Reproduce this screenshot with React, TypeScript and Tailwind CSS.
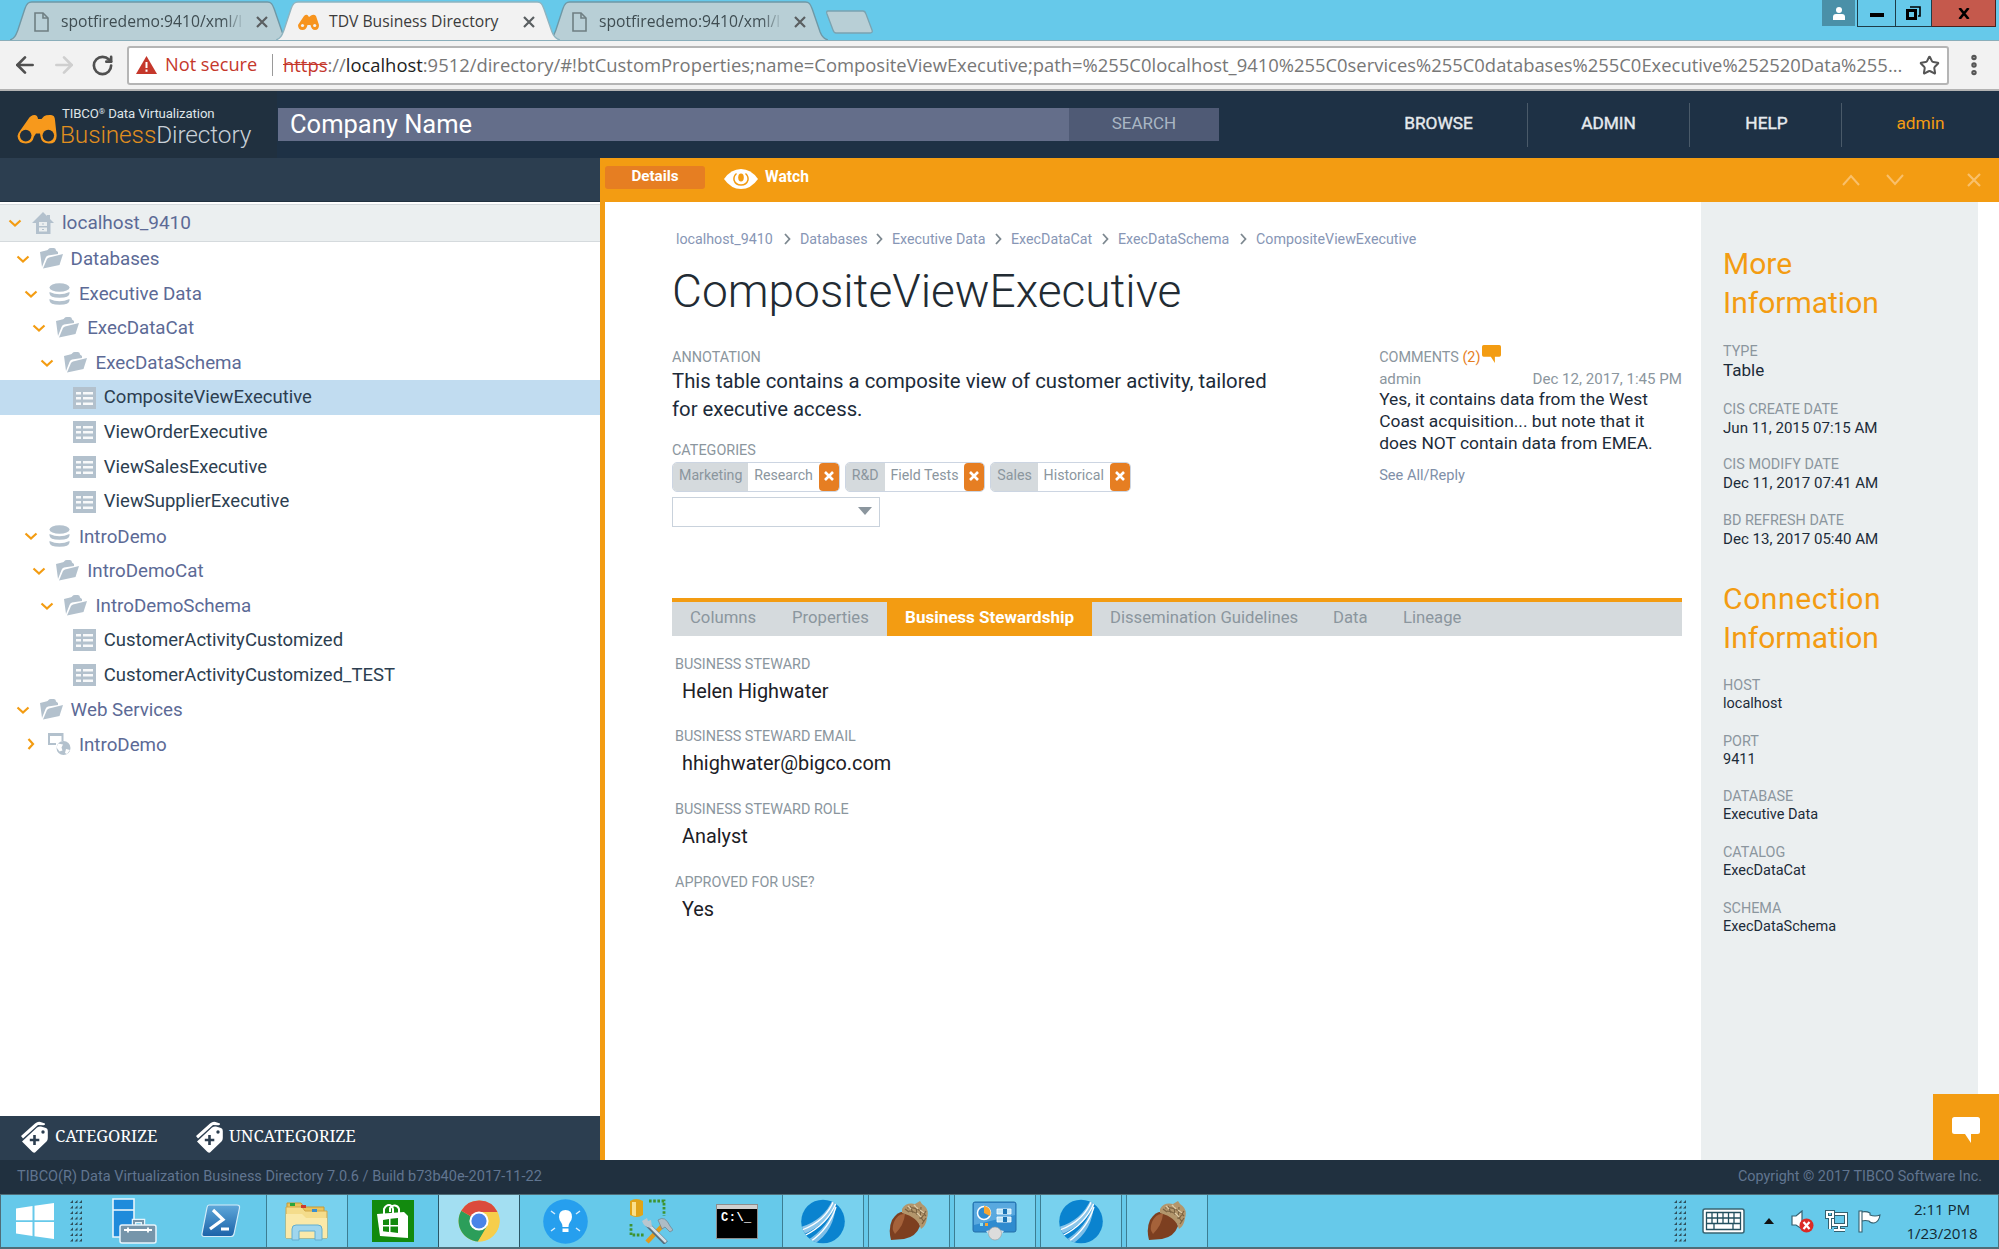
import React from 'react';
import { Star, ArrowLeft, ArrowRight, RotateCw, MoreVertical } from 'lucide-react';

const UI = "font-['Open_Sans',sans-serif]";

/* ---------- browser chrome ---------- */

function PageIcon() {
  return (
    <svg width="15" height="20" viewBox="0 0 15 20" fill="none" stroke="#6f7f83" strokeWidth="1.6" className="shrink-0">
      <path d="M1 1h8l5 5v13H1z" />
      <path d="M9 1v5h5" />
    </svg>
  );
}

function Binoculars({ w, h }: { w: number; h: number }) {
  return (
    <svg width={w} height={h} viewBox="0 0 40 30" className="shrink-0">
      <path
        fill="#f7991c"
        d="M1.500 19L11 5.500Q13.500 1 17.500 1Q20.500 1 21 5h3.500L27 2.200Q29 .8 34 1Q37.800 1.200 38 6L39.500 20Q40.500 29.500 32 29.500Q24.500 29.500 23.500 22.500L23 19.500h-4L17 22.500Q15.500 29.500 9 29.500Q1 29.500 .5 22z"
      />
      <circle cx="8.700" cy="21.600" r="5.800" fill="#20303f" />
      <circle cx="31.300" cy="21.600" r="5.800" fill="#20303f" />
    </svg>
  );
}

function BrowserTab({ title, active, fav, cut }: { title: string; active?: boolean; fav: React.ReactNode; cut?: boolean }) {
  return (
    <div className={active ? 'relative z-10 -mr-[12px] h-[39px] w-[284px]' : 'relative -mr-[14px] h-[39px] w-[280px]'}>
      <svg className="absolute inset-0 h-full w-full" viewBox="0 0 284 39" preserveAspectRatio="none">
        <path
          d="M0 39C5 37 6 34 8 29L15 8C17 2 19 1 22 1H261C265 1 266 3 268 8L276 31C278 36 280 38 284 39"
          fill={active ? '#f2f2f2' : '#b8cfd6'}
          stroke={active ? '#8fb4c0' : '#6e98a6'}
          strokeWidth="1.400"
        />
      </svg>
      <div className={active ? 'relative flex h-full items-center pl-[22px] pt-[3px]' : 'relative flex h-full items-center pl-[24px] pt-[3px]'}>
        {fav}
        <span
          className={
            active
              ? 'ml-[10px] w-[183px] whitespace-nowrap text-[15.700px] text-[#3b3b3b]'
              : 'ml-[12px] w-[184px] whitespace-nowrap text-[15.700px] text-[#3f4d52] [mask-image:linear-gradient(90deg,#000_88%,transparent)]'
          }
        >
          {title}
          {cut && 'l'}
        </span>
        <svg width="12" height="12" viewBox="0 0 12 12" className="ml-[11px]" stroke="#5a5f61" strokeWidth="2.200">
          <path d="M1 1l10 10M11 1L1 11" />
        </svg>
      </div>
    </div>
  );
}

function TabStrip() {
  return (
    <div className="relative flex h-[40px] items-end bg-[#66c9ea] pl-[10px]">
      <BrowserTab title="spotfiredemo:9410/xml/" cut fav={<PageIcon />} />
      <BrowserTab
        title="TDV Business Directory"
        active
        fav={
          <svg width="21" height="16" viewBox="0 0 21 16">
            <path fill="#f7941e" d="M0 11L6 2Q8 0 9.500 1l1.500 2L13 1.500Q16 0 18 2l3 9Q21 16 17 16Q13.500 16 12.500 11h-3Q8.500 16 4.500 16Q0 16 0 11z" />
            <circle cx="4.500" cy="11.500" r="1.600" fill="#f2f2f2" />
            <circle cx="16.700" cy="11.500" r="1.600" fill="#f2f2f2" />
          </svg>
        }
      />
      <BrowserTab title="spotfiredemo:9410/xml/" cut fav={<PageIcon />} />
      <svg width="48" height="24" viewBox="0 0 48 24" className="mb-[6px] ml-[12px]">
        <path d="M2 1H37Q39 1 40 4L46 20Q47 23 44 23H10Q8 23 7 20L1 4Q0 1 2 1z" fill="#b8cfd6" stroke="#7aa3b1" strokeWidth="1.300" />
      </svg>
      <div className="ml-auto flex h-[27px] self-start">
        <div className="mr-[2px] flex h-[26px] w-[33px] items-center justify-center bg-[#4a90a8]">
          <svg width="12" height="13" viewBox="0 0 12 13" fill="#fff">
            <circle cx="6" cy="3" r="3" />
            <path d="M0 13V10Q0 7 3 7h6q3 0 3 3v3z" />
          </svg>
        </div>
        <div className="flex w-[39px] items-center justify-center border border-t-0 border-[#1e3c48]">
          <div className="mt-[4px] h-[4px] w-[14px] bg-black" />
        </div>
        <div className="flex w-[36px] items-center justify-center border-b border-r border-[#1e3c48]">
          <svg width="15" height="14" viewBox="0 0 15 14" fill="none" stroke="#000">
            <path d="M1.500 4.500h8v8h-8z" strokeWidth="3" />
            <path d="M4 1h10v9h-2" strokeWidth="1.600" />
          </svg>
        </div>
        <div className="mr-[3px] flex w-[64px] items-center justify-center border-b border-r border-[#4d1f1b] bg-[#c5594c]">
          <svg width="12" height="11" viewBox="0 0 12 11" stroke="#000" strokeWidth="2.600">
            <path d="M1.500 0l9 11M10.500 0l-9 11" />
          </svg>
        </div>
      </div>
    </div>
  );
}

function AddressBar() {
  return (
    <div className="flex h-[51px] items-center border-b-[2px] border-t border-b-[#b3b3b3] border-t-[#8aaeba] bg-[#f2f2f2]">
      <ArrowLeft className="ml-[12px] h-[26px] w-[26px] text-[#505050]" strokeWidth={2.500} />
      <ArrowRight className="ml-[13px] h-[26px] w-[26px] text-[#cfcfcf]" strokeWidth={2.500} />
      <RotateCw className="ml-[14px] h-[23px] w-[23px] text-[#505050]" strokeWidth={2.800} />
      <div className="ml-[13px] flex h-[39px] w-[1822px] items-center whitespace-nowrap rounded-[3px] border-2 border-[#b5b5b5] bg-white text-[18.400px]">
        <svg width="21" height="18" viewBox="0 0 21 18" className="ml-[7px]">
          <path d="M10.500 0L21 18H0z" fill="#c5372b" />
          <path d="M10.500 6v6M10.500 13.500v2.200" stroke="#fff" strokeWidth="2" />
        </svg>
        <span className="ml-[8px] w-[96px] text-[18.200px] text-[#c5372b]">Not secure</span>
        <span className="ml-[11px] h-[22px] w-px bg-[#9a9a9a]" />
        <span className="ml-[10px] text-[#c5372b] line-through">https</span>
        <span className="text-[#777]">://</span>
        <span className="text-[#222]">localhost</span>
        <span className="tracking-[0.006px] text-[#777]">
          :9512/directory/#!btCustomProperties;name=CompositeViewExecutive;path=%255C0localhost_9410%255C0services%255C0databases%255C0Executive%252520Data%255...
        </span>
        <Star className="ml-auto mr-[7px] h-[21px] w-[21px] text-[#555]" strokeWidth={2.300} />
      </div>
      <MoreVertical className="ml-[12px] h-[26px] w-[26px] text-[#555]" strokeWidth={3} />
    </div>
  );
}

/* ---------- application header ---------- */

function Header() {
  return (
    <div className="flex h-[67px] bg-[#1e3145]">
      <div className="flex w-[277px] bg-[#20303f] pl-[17px] pt-[22px]">
        <div className="pt-[1px]"><Binoculars w={40} h={30} /></div>
        <div className="ml-[3px] flex flex-col whitespace-nowrap">
          <span className="-mt-[7px] ml-[2px] text-[13.200px] leading-[16px] tracking-[-0.100px] text-[#dfe4e8]">
            TIBCO<sup className="relative -top-[4px] text-[8px] leading-none">®</sup> Data Virtualization
          </span>
          <span className="-mt-[1px] text-[24.400px] font-light leading-[28px] tracking-[-0.100px] text-[#c8d0d8]">
            <span className="text-[#e08f1e]">Business</span>Directory
          </span>
        </div>
      </div>
      <div className="ml-[1px] mt-[17px] flex h-[33px]">
        <div className="flex w-[791px] items-center bg-[#646e8a] pb-[1px] pl-[12px] text-[25.500px] text-white">Company Name</div>
        <div className="flex w-[150px] items-center justify-center bg-[#4f5a75] pb-[2px] text-[17px] text-[#a9b6c4]">SEARCH</div>
      </div>
      <div className="ml-[131px] mt-[12px] flex h-[44px] text-[17.300px] text-[#e6eaee] [&>div]:flex [&>div]:items-center [&>div]:justify-center [&>div]:pb-[2px]">
        <div className="w-[178px] border-r border-[#4a5a69] pr-0 [-webkit-text-stroke:0.400px]">BROWSE</div>
        <div className="w-[162px] border-r border-[#4a5a69] [-webkit-text-stroke:0.400px]">ADMIN</div>
        <div className="w-[152px] border-r border-[#4a5a69] pl-[2px] [-webkit-text-stroke:0.400px]">HELP</div>
        <div className="w-[157px] text-[#f39c12]">admin</div>
      </div>
    </div>
  );
}

/* ---------- tree ---------- */

type Kind = 'home' | 'folder' | 'db' | 'table' | 'web';
const TREE: [number, Kind, string, boolean?][] = [
  [1, 'folder', 'Databases'],
  [2, 'db', 'Executive Data'],
  [3, 'folder', 'ExecDataCat'],
  [4, 'folder', 'ExecDataSchema'],
  [5, 'table', 'CompositeViewExecutive', true],
  [5, 'table', 'ViewOrderExecutive'],
  [5, 'table', 'ViewSalesExecutive'],
  [5, 'table', 'ViewSupplierExecutive'],
  [2, 'db', 'IntroDemo'],
  [3, 'folder', 'IntroDemoCat'],
  [4, 'folder', 'IntroDemoSchema'],
  [5, 'table', 'CustomerActivityCustomized'],
  [5, 'table', 'CustomerActivityCustomized_TEST'],
  [1, 'folder', 'Web Services'],
  [2, 'web', 'IntroDemo'],
];

function TreeIcon({ kind }: { kind: Kind }) {
  return (
    <svg width="23" height="22" viewBox="0 0 23 22" className="shrink-0" fill="#b3c1cd">
      {kind === 'home' && (
        <>
          <path d="M11 0l4 4V3h3v4l4 4h-3.500v11H4V11H0z" />
          <path d="M7 10h8v4H7zM7 15.500h8v4H7z" fill="#ebeff0" />
          <path d="M10 11.500h2v1h-2zM10 17h2v1h-2z" />
        </>
      )}
      {kind === 'folder' && (
        <>
          <path d="M0 4l6-1.500Q8 2 8.500 1Q9 0 11 0h3q2 0 2 2.500L18 4v2L8 7.500Q6 8 5.500 10L2 19z" />
          <path d="M9 9.500L23 6l-3.500 11L3 20.500L7 11Q7.500 10 9 9.500z" />
        </>
      )}
      {kind === 'db' && (
        <>
          <ellipse cx="11.500" cy="4.500" rx="10" ry="4.300" />
          <path d="M1.500 9q10 4.600 20 0v1.500q0 4.200-10 4.200t-10-4.200z" />
          <path d="M1.500 16q10 4.600 20 0v1.500q0 4.200-10 4.200t-10-4.200z" />
        </>
      )}
      {kind === 'table' && (
        <>
          <path d="M0 0h23v22H0z" />
          <path d="M3 5h5v2.500H3zM10 5h10v2.500H10zM3 10h5v2.500H3zM10 10h10v2.500H10zM3 15.500h5V18H3zM10 15.500h10V18H10z" fill="#fff" fillOpacity=".9" />
        </>
      )}
      {kind === 'web' && (
        <>
          <path d="M0 0h15.500v8h-2V3H2v7h6v2H0z" />
          <circle cx="15.500" cy="15" r="7" />
          <path d="M10 10.500l5 1-1.500 3 1 3-3 1-3-4zM18 16l4 1-3 4-2-1z" fill="#fff" />
        </>
      )}
    </svg>
  );
}

function Chevron({ open = true }: { open?: boolean }) {
  return (
    <svg width="14" height="14" viewBox="0 0 14 14" fill="none" stroke="#f39c12" strokeWidth="2.200" className="shrink-0">
      <path d={open ? 'M1.500 4.500l5.500 5 5.500-5' : 'M4.500 2l4.500 5-4.500 5'} />
    </svg>
  );
}

function Tree() {
  return (
    <div className="flex w-[600px] flex-col">
      <div className="h-[44px] border-b border-[#20303f] bg-[#2c3e50]" />
      <div className="mt-[2px] flex h-[37.500px] items-center border-y border-[#d5dadd] bg-[#ebeff0] pl-[8px]">
        <Chevron />
        <div className="ml-[10px]"><TreeIcon kind="home" /></div>
        <span className="ml-[7px] text-[19px] text-[#5c6a96]">localhost_9410</span>
      </div>
      {TREE.map(([lvl, kind, label, sel], i) => (
        <div
          key={i}
          className={sel ? 'flex h-[34.700px] items-center bg-[#c1dcf0] pl-[7.300px]' : 'flex h-[34.700px] items-center pl-[7.300px]'}
        >
          <div style={{ width: lvl * 8.3 }} className="shrink-0" />
          {kind === 'table' ? <div className="w-[14px] shrink-0" /> : <Chevron open={kind !== 'web'} />}
          <div className="ml-[10px]"><TreeIcon kind={kind} /></div>
          <span
            className={
              kind === 'table'
                ? 'ml-[8px] whitespace-nowrap pt-[1px] text-[18.500px] text-[#2c3e50]'
                : 'ml-[8px] whitespace-nowrap pt-[0.500px] text-[18.750px] text-[#5c6a96]'
            }
          >
            {label}
          </span>
        </div>
      ))}
      <div className="mt-auto flex h-[44.500px] items-center bg-[#2c3e50] font-['Noto_Serif',serif] text-[16.600px] tracking-[-0.050px] text-white">
        <TagIcon className="ml-[20px]" />
        <span className="ml-[7px] w-[140px] pb-[3px]">CATEGORIZE</span>
        <TagIcon className="" />
        <span className="ml-[6px] pb-[3px]">UNCATEGORIZE</span>
      </div>
    </div>
  );
}

function TagIcon({ className }: { className: string }) {
  return (
    <svg width="28" height="32" viewBox="0 0 28 32" className={`${className} mb-[2px] shrink-0`} fill="#fff">
      <path d="M1 15L15 2.500Q18 0 20.500 1L25 2.500Q25.500 4.500 23 4.200L18 4L3 17.500z" />
      <path d="M2 20.500L17 6.500Q19 5 21 5.500L26 7q1.800.5 1.800 3V17Q27.800 19 26.500 20.500L15 31.500Q13 32 12 30.500z" />
      <circle cx="23" cy="11" r="1.700" fill="#2c3e50" />
      <path d="M14.500 14v10M9.800 19h9.500" stroke="#2c3e50" strokeWidth="2.600" />
    </svg>
  );
}

/* ---------- details ---------- */

const LABEL = 'text-[14.400px] leading-[20px] text-[#8b969e] whitespace-nowrap';

function Tag({ group, name }: { group: string; name: string }) {
  return (
    <div className="flex h-[30px] overflow-hidden rounded-[5px] border border-[#ccd5e2] text-[14.200px] text-[#8b969e]">
      <span className="flex items-center whitespace-nowrap bg-[#d5dadd] px-[6px] pb-[2px]">{group}</span>
      <span className="flex items-center whitespace-nowrap bg-white px-[5.800px] pb-[2px]">{name}</span>
      <span className="flex w-[20px] items-center justify-center rounded-[4px] bg-[#e67e22] pb-[3px]">
        <svg width="10" height="10" viewBox="0 0 10 10" stroke="#fff" strokeWidth="2.600">
          <path d="M1 1l8 8M9 1L1 9" />
        </svg>
      </span>
    </div>
  );
}

function Bubble({ w, h, fill }: { w: number; h: number; fill: string }) {
  return (
    <svg width={w} height={h} viewBox="0 0 28 26" preserveAspectRatio="none" fill={fill}>
      <path d="M2.500 0h23Q28 0 28 2.500v12Q28 17 25.500 17H19v9L13 17H2.500Q0 17 0 14.500v-12Q0 0 2.500 0z" />
    </svg>
  );
}

const CRUMBS: [string, string][] = [
  ['localhost_9410', 'w-[124px]'],
  ['Databases', 'w-[92px]'],
  ['Executive Data', 'w-[119px]'],
  ['ExecDataCat', 'w-[107px]'],
  ['ExecDataSchema', 'w-[138px]'],
  ['CompositeViewExecutive', ''],
];

const FIELDS: [string, string][] = [
  ['BUSINESS STEWARD', 'Helen Highwater'],
  ['BUSINESS STEWARD EMAIL', 'hhighwater@bigco.com'],
  ['BUSINESS STEWARD ROLE', 'Analyst'],
  ['APPROVED FOR USE?', 'Yes'],
];

function Info({ label, value, big, date }: { label: string; value: string; big?: boolean; date?: boolean }) {
  return (
    <div className={big ? 'h-[58px]' : 'h-[55.600px]'}>
      <div className={LABEL}>{label}</div>
      <div
        className={
          big
            ? '-mt-[2px] text-[17px] leading-[20px] text-[#1c2b39]'
            : date
              ? '-mt-[1px] whitespace-nowrap text-[15.100px] leading-[18px] text-[#1c2b39]'
              : '-mt-[1px] whitespace-nowrap text-[14.500px] leading-[18px] text-[#1c2b39]'
        }
      >
        {value}
      </div>
    </div>
  );
}

function Details() {
  return (
    <div className="flex flex-1 flex-col border-l-[5px] border-[#f39c12]">
      <div className="flex h-[44px] items-start bg-[#f39c12] pt-[8px] text-[15.600px] font-bold text-white">
        <div className="flex h-[23px] w-[100px] items-center justify-center rounded-[3px] bg-[#e67e22] pb-[2px] text-[15.200px]">Details</div>
        <svg width="34" height="20" viewBox="0 0 34 20" className="ml-[19px] mt-[3px]">
          <path d="M0 10Q7 0 17 0T34 10Q27 20 17 20T0 10z" fill="#fff" />
          <path d="M12.500 4.500Q9.500 7 10 11Q11.500 16 17 16T24 11Q24.500 7 21.500 4.500" fill="none" stroke="#f39c12" strokeWidth="1.500" />
          <ellipse cx="17" cy="8.500" rx="2.800" ry="4" fill="#f39c12" />
        </svg>
        <span className="ml-[7px]">Watch</span>
        <div className="ml-auto mr-[18px] mt-[7px] flex items-center">
          <svg width="18" height="14" viewBox="0 0 18 14" fill="none" stroke="#f9c06b" strokeWidth="2"><path d="M1 12l8-9 8 9" /></svg>
          <svg width="18" height="14" viewBox="0 0 18 14" fill="none" stroke="#f9c06b" strokeWidth="2" className="ml-[26px]"><path d="M1 2l8 9 8-9" /></svg>
          <svg width="14" height="14" viewBox="0 0 14 14" fill="none" stroke="#f9c06b" strokeWidth="2.200" className="ml-[63px]"><path d="M1 1l12 12M13 1L1 13" /></svg>
        </div>
      </div>

      <div className="flex flex-1 bg-white">
        <div className="flex w-[1077px] flex-col pl-[67px]">
          <div className="mt-[27px] flex h-[20px] pl-[4px] text-[14.250px] leading-[20px] text-[#8796b5]">
            {CRUMBS.map(([t, w], i) => (
              <span key={t} className={`${w} flex whitespace-nowrap`}>
                {t}
                {i < 5 && (
                  <svg width="7" height="12" viewBox="0 0 7 12" fill="none" stroke="#7d8890" strokeWidth="1.800" className="ml-auto mr-[9px] mt-[4px]">
                    <path d="M1 1l4.500 5L1 11" />
                  </svg>
                )}
              </span>
            ))}
          </div>
          <h1 className="mt-[14px] text-[46.050px] font-light leading-[56px] text-[#222b33]">CompositeViewExecutive</h1>

          <div className="mt-[29px] flex h-[250px]">
            <div className="w-[707.500px]">
              <div className={LABEL}>ANNOTATION</div>
              <p className="w-[620px] text-[20.330px] leading-[27.800px] text-[#1c2b39]">
                This table contains a composite view of customer activity, tailored
                <br />
                for executive access.
              </p>
              <div className={`${LABEL} mt-[17.500px]`}>CATEGORIES</div>
              <div className="mt-[1px] flex gap-[5px]">
                <Tag group="Marketing" name="Research" />
                <Tag group="R&D" name="Field Tests" />
                <Tag group="Sales" name="Historical" />
              </div>
              <div className="mt-[5px] flex h-[30px] w-[208px] items-center justify-end border border-[#c9d2dc] pb-[2px] pr-[7px]">
                <svg width="14" height="8" viewBox="0 0 14 8"><path d="M0 0h14L7 8z" fill="#8b969e" /></svg>
              </div>
            </div>
            <div className="w-[303px]">
              <div className={`${LABEL} flex`}>
                COMMENTS&nbsp;<span className="text-[#e67e22]">(2)</span>
                <div className="-mt-[3px] ml-[2px]"><Bubble w={19} h={18} fill="#f39c12" /></div>
              </div>
              <div className="flex justify-between pt-[1px] text-[15.100px] leading-[20px] text-[#8b969e]">
                <span>admin</span>
                <span>Dec 12, 2017, 1:45 PM</span>
              </div>
              <p className="-mt-[1px] whitespace-nowrap text-[17.400px] leading-[22px] text-[#1c2b39]">
                Yes, it contains data from the West
                <br />
                Coast acquisition... but note that it
                <br />
                does NOT contain data from EMEA.
              </p>
              <div className="mt-[11px] text-[14.600px] leading-[20px] text-[#7f8fa8]">See All/Reply</div>
            </div>
          </div>

          <div className="flex h-[37.500px] w-[1010px] border-t-[4px] border-[#f39c12] bg-[#d5dadd] text-[16.700px] text-[#8b969e] [&>span]:flex [&>span]:items-center [&>span]:whitespace-nowrap [&>span]:pb-[3px]">
            <span className="w-[102px] pl-[18px]">Columns</span>
            <span className="w-[113px] pl-[18px]">Properties</span>
            <span className="w-[205px] justify-center bg-[#f39c12] text-[17px] font-bold text-white">Business Stewardship</span>
            <span className="w-[223px] pl-[18px]">Dissemination Guidelines</span>
            <span className="w-[70px] pl-[18px]">Data</span>
            <span className="pl-[18px]">Lineage</span>
          </div>

          <div className="mt-[19px] pl-[3px]">
            {FIELDS.map(([l, v]) => (
              <div key={l} className="h-[72.800px]">
                <div className={LABEL}>{l}</div>
                <div className="ml-[7px] mt-[4px] text-[19.850px] leading-[26px] text-[#1c2026]">{v}</div>
              </div>
            ))}
          </div>
        </div>

        <div className="ml-[19px] w-[277px] bg-[#ebeff0] pl-[22px]">
          <h2 className="mt-[41.500px] w-[160px] text-[30px] leading-[39px] text-[#f39c12]">More Information</h2>
          <div className="mt-[20px]">
            <Info label="TYPE" value="Table" big />
            <Info label="CIS CREATE DATE" value="Jun 11, 2015 07:15 AM" date />
            <Info label="CIS MODIFY DATE" value="Dec 11, 2017 07:41 AM" date />
            <Info label="BD REFRESH DATE" value="Dec 13, 2017 05:40 AM" date />
          </div>
          <h2 className="mt-[13px] w-[160px] text-[30px] leading-[39px] text-[#f39c12]"><span className="tracking-[0.600px]">Connection</span> Information</h2>
          <div className="mt-[19px]">
            <Info label="HOST" value="localhost" />
            <Info label="PORT" value="9411" />
            <Info label="DATABASE" value="Executive Data" />
            <Info label="CATALOG" value="ExecDataCat" />
            <Info label="SCHEMA" value="ExecDataSchema" />
          </div>
        </div>
      </div>
    </div>
  );
}

/* ---------- taskbar ---------- */

function Grip() {
  return (
    <svg width="12" height="42" viewBox="0 0 12 42" fill="#2f4e5a">
      {[0, 1, 2, 3, 4, 5, 6, 7].map((r) => (
        <path key={r} d={`M0 ${r * 5.5 + 3}l3-3v3zM4.500 ${r * 5.5 + 3}l3-3v3zM9 ${r * 5.5 + 3}l3-3v3z`} />
      ))}
    </svg>
  );
}

function Tibco() {
  return (
    <svg width="44" height="45" viewBox="0 0 44 45">
      <defs>
        <clipPath id="disc"><circle cx="22" cy="22.500" r="21.800" /></clipPath>
      </defs>
      <g clipPath="url(#disc)">
        <path d="M0 0h44v45H0z" fill="#0a83cf" />
        <path d="M0 28Q23 21 32 0h4Q30 24 1 36z" fill="#8cc6ea" />
        <path d="M5 42Q28 29 35 3Q34 32 13 45z" fill="#7dbfe8" />
        <path d="M1 31Q25 22 33 1M3 37Q27 25 35 4M9 43Q28 30 35 8" stroke="#fff" strokeWidth="1.300" fill="none" />
      </g>
    </svg>
  );
}

function Acorn() {
  return (
    <svg width="40" height="40" viewBox="0 0 40 40">
      <path d="M3 19Q9 9 17 11Q29 15 31 25Q27 36 15 38L2 39Q-1 28 3 19z" fill="#7d3f20" />
      <path d="M5 21Q9 12 16 13Q15 24 6 33Q2 28 5 21z" fill="#a5623a" />
      <path d="M13 8Q17 1 26 3L31 0l2 3Q41 8 38 17Q37 25 32 28Q29 16 13 12z" fill="#b3966c" />
      <path d="M16 8l4 3M21 5l3 7M27 5l1 9M32 6l-1 12M37 10l-5 8M37 17l-4 6M18 7q10-2 19 8M20 10q9 0 15 11" stroke="#7c6342" strokeWidth="1.200" fill="none" />
      <path d="M19 5l3 3M25 4l4 4M31 9l4 3M28 12l4 4" stroke="#decba6" strokeWidth="1.400" />
    </svg>
  );
}

const ICONS: Record<string, React.ReactNode> = {
  server: (
    <svg width="46" height="46" viewBox="0 0 46 46">
      <path d="M1 1h21v38H1z" fill="#1f8bdb" stroke="#e8f4fb" strokeWidth="1.600" />
      <path d="M1 12h21" stroke="#e8f4fb" strokeWidth="1.600" />
      <path d="M22 27v-4h9v4" fill="none" stroke="#e8f4fb" strokeWidth="4.500" />
      <path d="M22 27v-4h9v4" fill="none" stroke="#7695aa" strokeWidth="2" />
      <rect x="8" y="27" width="36" height="18" rx="2" fill="#7695aa" stroke="#e8f4fb" strokeWidth="1.500" />
      <path d="M12 32h28M16 29.500v5M36 29.500v5" stroke="#fff" strokeWidth="1.800" />
    </svg>
  ),
  ps: (
    <svg width="40" height="34" viewBox="0 0 40 34">
      <defs>
        <linearGradient id="psg" x1="0" y1="0" x2="0" y2="1"><stop offset="0" stopColor="#5fa8da" /><stop offset="1" stopColor="#1b62a8" /></linearGradient>
      </defs>
      <path d="M8 1h28q3 0 2.500 3L33 30q-.6 2.500-3 2.500H3Q.5 32.500 1 29.500L6 3.500Q6.500 1 8 1z" fill="url(#psg)" stroke="#d3ecf8" strokeWidth="1.200" />
      <path d="M12 6l10 9.500-13 9.500M20 25h8" stroke="#fff" strokeWidth="3.200" fill="none" />
    </svg>
  ),
  files: (
    <svg width="44" height="42" viewBox="0 0 44 42">
      <path d="M2 3h14l3 4h20v8H2z" fill="#e9c35c" stroke="#c79a35" />
      <path d="M1 7h16l3 4h22v27H1z" fill="#f4dc8b" stroke="#cfa648" />
      <path d="M5 3h5v3H5z" fill="#27a53a" />
      <path d="M16 5h5v3h-5z" fill="#cf3a2c" />
      <path d="M27 9h5v3h-5z" fill="#3a8fd0" />
      <path d="M1 14h16l4 4h21v20H1z" fill="#fae9a9" />
      <path d="M7 40V29q0-4 4-4h22q4 0 4 4v11h-7v-9H14v9z" fill="#9fd6ee" stroke="#62aed0" />
    </svg>
  ),
  store: (
    <svg width="42" height="42" viewBox="0 0 42 42">
      <path d="M0 0h42v42H0z" fill="#128a0e" />
      <path d="M5 14l27-2 4 4v22l-28-2z" fill="#fff" />
      <path d="M12 14V9q2-4 5-4t4 4v4M18 12V8q2-3 5-2.500T27 9v4" stroke="#fff" strokeWidth="2" fill="none" />
      <path d="M11 20l6-1v6h-6zM18.500 18.800L26 18v7h-7.500zM11 26.500h6V32l-6-.8zM18.500 26.500H26V33l-7.500-1z" fill="#128a0e" />
    </svg>
  ),
  chrome: (
    <svg width="42" height="42" viewBox="0 0 42 42">
      <circle cx="21" cy="21" r="20.500" fill="#f6ce4b" />
      <path d="M21 21L3.300 10.800A20.500 20.500 0 0 0 20 41.500L30 26z" fill="#2c9e5a" />
      <path d="M21 21L3.300 10.800A20.500 20.500 0 0 1 39.500 12H21z" fill="#db4b3c" />
      <path d="M21 12h18.500A20.500 20.500 0 0 1 20 41.500L29 26z" fill="#f6ce4b" />
      <circle cx="21" cy="21" r="9.600" fill="#fff" />
      <circle cx="21" cy="21" r="7.600" fill="#4a84e8" />
    </svg>
  ),
  bulb: (
    <svg width="45" height="45" viewBox="0 0 45 45">
      <circle cx="22.500" cy="22.500" r="22.300" fill="#269fee" />
      <path d="M22.500 11q6.500 0 6.500 7 0 3-2.500 6-1 1.500-1 4h-6q0-2.500-1-4-2.500-3-2.500-6 0-7 6.500-7zM19.500 29.500h6V33h-6z" fill="#fff" />
      <path d="M8 12l4 3M37 12l-4 3M8 32l4-3M37 32l-4-3" stroke="#d6edfc" strokeWidth="1.500" />
    </svg>
  ),
  tools: (
    <svg width="44" height="46" viewBox="0 0 44 46">
      <path d="M1 3q6-4 13 0v14q-6 4-13 0z" fill="#e0a419" />
      <path d="M3 4h4v14q-3 0-4-1z" fill="#fbe08a" />
      <path d="M20 3h15v15M2 26v11h14" stroke="#3e9330" strokeWidth="2.800" strokeDasharray="2.600 1.600" fill="none" />
      <path d="M18 44L37 24" stroke="#e19a1d" strokeWidth="4.500" />
      <path d="M18 26L37 45" stroke="#59707e" strokeWidth="5" />
      <path d="M17 24l20 20" stroke="#d5dfe5" strokeWidth="2.600" />
      <path d="M13 23q3 8 10 6l-1-7-3 1-1-3z" fill="#b9c6ce" />
      <path d="M29 22q7-5 12 6l3 4-3 2-5-5-3 2z" fill="#aebcc5" stroke="#6e7f89" strokeWidth=".7" />
    </svg>
  ),
  cmd: (
    <div className="h-[35px] w-[42px] border border-[#8d8d8d] bg-black">
      <div className="h-[4px] bg-[#cfcfcf]" />
      <div className="pl-[4px] pt-[3px] font-['Liberation_Mono',monospace] text-[12px] font-bold leading-[12px] tracking-[0.500px] text-white">C:\_</div>
    </div>
  ),
  tibco: <Tibco />,
  acorn: <Acorn />,
  panel: (
    <svg width="46" height="40" viewBox="0 0 46 40">
      <rect x="1" y="1" width="43" height="30" rx="2" fill="#2f8bcf" stroke="#246ea8" />
      <path d="M2 2h41v12L2 24z" fill="#59a9df" />
      <circle cx="12" cy="12" r="6.500" fill="#2f8bcf" stroke="#fff" strokeWidth="1.500" />
      <path d="M12 12V5a7 7 0 0 1 6 10z" fill="#f7a632" />
      <path d="M25 8h14v5H25zM25 16h14v5H25z" fill="#bfe6f8" stroke="#fff" strokeWidth=".8" />
      <path d="M31 8h4v5h-4zM31 16h4v5h-4z" fill="#1873b4" />
      <path d="M8 22h3v3H8z" fill="#8fe0f5" />
      <path d="M13 22h3v3h-3z" fill="#f7a632" />
      <path d="M14 30q9-3 18 0l-3 4H17z" fill="#cfe3ee" />
      <circle cx="23" cy="32.500" r="6.500" fill="#dcdcdc" stroke="#9a9a9a" strokeWidth=".6" />
    </svg>
  ),
};

const TASKS: [string, number][] = [
  ['server', 0], ['ps', 0], ['files', 1], ['store', 0], ['chrome', 2], ['bulb', 0], ['tools', 0], ['cmd', 0],
  ['tibco', 1], ['acorn', 1], ['panel', 1], ['tibco', 1], ['acorn', 1],
];

function Taskbar() {
  return (
    <div className="flex h-[55px] items-center border border-b-[2px] border-[#4f6d78] bg-[#66c9ea]">
      <svg width="38" height="36" viewBox="0 0 38 36" fill="#fff" className="ml-[15px] shrink-0">
        <path d="M0 5.500L16.500 3v14.300H0zM18.500 2.700L38 0v17.300H18.500zM0 19h16.500v14L0 30.500zM18.500 19H38v17l-19.500-2.700z" />
      </svg>
      <div className="ml-[16px]"><Grip /></div>
      <div className="ml-[12px] flex h-full gap-[4px]">
        {TASKS.map(([n, s], i) => (
          <div
            key={i}
            className={
              s === 2
                ? 'flex w-[82px] items-center justify-center border-x border-[#2a5666] bg-[#a3dff2]'
                : s === 1
                  ? 'flex w-[82px] items-center justify-center border-x border-[#3c7d92] bg-[#78d1ee]'
                  : 'flex w-[82px] items-center justify-center'
            }
          >
            {ICONS[n]}
          </div>
        ))}
      </div>
      <div className="ml-auto mr-[14px] flex items-center">
        <Grip />
        <svg width="43" height="26" viewBox="0 0 43 26" className="ml-[16px]">
          <rect x="1" y="1" width="41" height="24" rx="2" fill="#fff" stroke="#3a6472" strokeWidth="1.500" />
          <path d="M4.500 4.500h34v17h-34zM4.500 10h34M4.500 15.500h34M10 4.500v11M15.500 4.500v11M21 4.500v11M26.500 4.500v11M32 4.500v11M12 15.500v6M31 15.500v6" fill="none" stroke="#24505f" strokeWidth="1.300" />
        </svg>
        <svg width="10" height="6" viewBox="0 0 10 6" className="ml-[19px]"><path d="M5 0l5 6H0z" fill="#111" /></svg>
        <svg width="23" height="23" viewBox="0 0 23 23" className="ml-[17px]">
          <path d="M1 6h4l6-5v18l-6-4H1z" fill="#fff" stroke="#356171" strokeWidth="1.200" />
          <circle cx="15.500" cy="15.500" r="7" fill="#dc2a25" />
          <path d="M12.500 12l6 7M18.500 12l-6 7" stroke="#fff" strokeWidth="2.200" />
        </svg>
        <svg width="23" height="22" viewBox="0 0 23 22" fill="none" className="ml-[11px]">
          <path d="M8 4h13v11H8zM14 15v4M9 20h11" stroke="#33606f" strokeWidth="4" />
          <path d="M8 4h13v11H8zM14 15v4M9 20h11" stroke="#fff" strokeWidth="2" />
          <path d="M2 1h6v6H2zM5 7v12" stroke="#33606f" strokeWidth="4" />
          <path d="M2 2h6v5H2zM5 7v12" stroke="#fff" strokeWidth="2" />
        </svg>
        <svg width="23" height="23" viewBox="0 0 23 23" className="ml-[10px]">
          <path d="M1 1h3v21H1zM4 2q4-1 8 1v2q5 2 10 0-1 7-6 8-4 0-5-2-4-1-7 0z" fill="#fff" stroke="#33606f" strokeWidth="1.100" />
        </svg>
        <div className="ml-[19px] w-[84px] whitespace-nowrap text-center text-[15.200px] leading-[24px] tracking-[-0.600px] text-[#132a33]">
          <div className="tracking-[-0.100px]">2:11 PM</div>
          <div className="tracking-[-0.100px]">1/23/2018</div>
        </div>
      </div>
    </div>
  );
}

export default function App() {
  return (
    <div className="flex h-[1249px] w-[1999px] flex-col overflow-hidden bg-white font-[Roboto,sans-serif]">
      <div className={UI}>
        <TabStrip />
        <AddressBar />
      </div>
      <Header />
      <div className="relative flex h-[1002px]">
        <Tree />
        <Details />
        <div className="absolute bottom-0 right-0 flex h-[66px] w-[66px] items-center justify-center bg-[#f39c12] pt-[6px]">
          <Bubble w={28} h={26} fill="#fff" />
        </div>
      </div>
      <div className="flex h-[34px] items-center justify-between bg-[#20303f] pb-[1px] pl-[17px] pr-[17px] text-[14.500px] text-[#607590]">
        <span>TIBCO(R) Data Virtualization Business Directory 7.0.6 / Build b73b40e-2017-11-22</span>
        <span className="text-[14.400px]">Copyright © 2017 TIBCO Software Inc.</span>
      </div>
      <div className={UI}>
        <Taskbar />
      </div>
    </div>
  );
}
